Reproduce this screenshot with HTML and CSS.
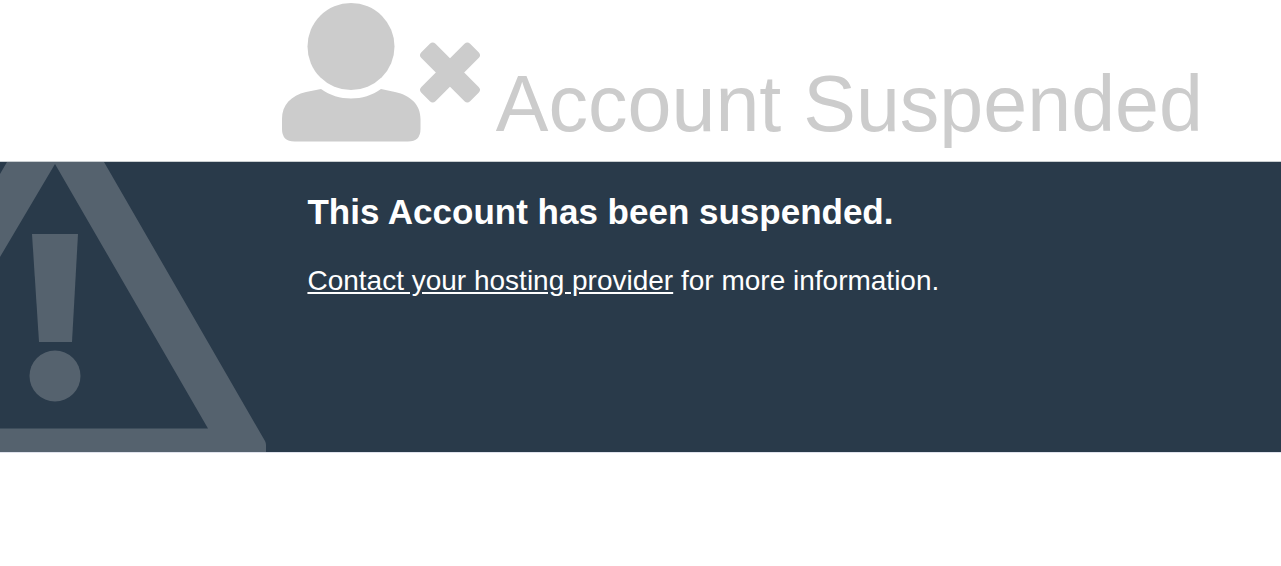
FILE: index.html
```html
<!DOCTYPE html>
<html lang="en">
<head>
    <meta charset="UTF-8">
    <meta name="viewport" content="width=device-width, initial-scale=1.0">
    <title>Account Suspended</title>
    <link rel="stylesheet" href="styles.css">
</head>
<body>
    <header class="status">
        <svg class="user-icon" viewBox="0 0 198 150" aria-hidden="true">
            <circle cx="69" cy="46.5" r="43.5"/>
            <path d="M39 89 C48 95.500 58 98.500 69 98.500 C80 98.500 90 95.500 99 89 L113 92 C129 95.500 138.500 105 138.500 119 V129 Q138.500 141.500 126 141.500 H12.500 Q0 141.500 0 129 V119 C0 105 9 95.500 24 92 Z"/>
            <g transform="translate(168 72.5) rotate(45)">
                <rect x="-34.5" y="-10" width="69" height="20" rx="4"/>
                <rect x="-10" y="-34.5" width="20" height="69" rx="4"/>
            </g>
        </svg>
        <h1>Account Suspended</h1>
    </header>

    <main class="info">
        <svg class="warning-icon" viewBox="0 0 266 290" aria-hidden="true">
            <path fill-rule="evenodd" d="M7 0 H104 L265 279 Q266 281 266 283 V290 H0 V266.500 H208 L55 2 L0 95 V12 Z"/>
            <path d="M32 72 H78 L72 180 H39 Z"/>
            <circle cx="55" cy="214" r="25.500"/>
        </svg>
        <div class="info-text">
            <h2>This Account has been suspended.</h2>
            <p><a href="#">Contact your hosting provider</a> for more information.</p>
        </div>
    </main>
</body>
</html>
```

FILE: styles.css
```css
body {
    margin: 0;
    font-family: Arial, "Liberation Sans", Helvetica, sans-serif;
    background: #ffffff;
    color: #cccccc;
}

h1,
h2,
p {
    margin: 0;
}

.status {
    display: flex;
    align-items: flex-end;
    gap: 16px;
    padding: 0 0 11px 22%;
}

.user-icon {
    flex: none;
    width: 198px;
    fill: #cccccc;
}

h1 {
    font-size: 79px;
    font-weight: 400;
    line-height: 92px;
}

.info {
    display: grid;
    grid-template-columns: 24% 1fr;
    background: #293a4a;
    color: #ffffff;
    border-top: 1px solid #c9ced1;
    border-bottom: 1px solid #dfe2ec;
}

.warning-icon {
    display: block;
    width: 266px;
    fill: #55626e;
}

.info-text {
    padding: 30px 0;
}

h2 {
    font-size: 35px;
    line-height: 40px;
    margin-bottom: 32px;
}

p {
    font-size: 28px;
    line-height: 34px;
}

a {
    color: #ffffff;
}

@media (max-width: 1100px) {
    .status {
        flex-wrap: wrap;
        padding-left: 20px;
    }

    .info {
        grid-template-columns: 1fr;
    }

    .warning-icon {
        display: none;
    }

    .info-text {
        padding: 30px 20px;
    }
}
```
